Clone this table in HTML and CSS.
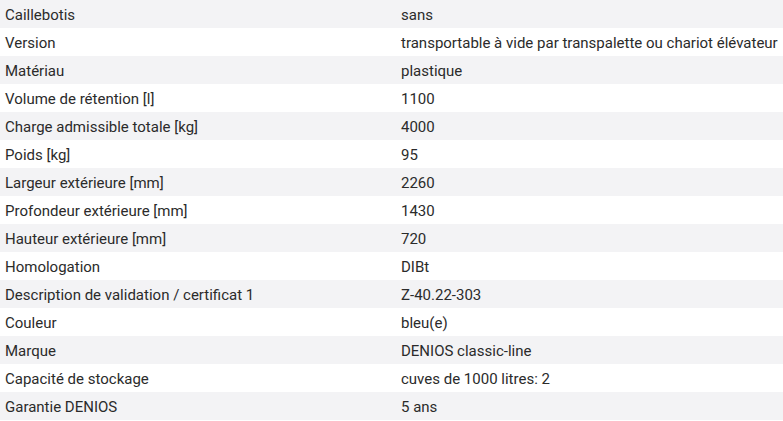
FILE: index.html
```html
<!DOCTYPE html>
<html lang="fr">
<head>
<meta charset="utf-8">
<link rel="stylesheet" href="styles.css">
</head>
<body>
<div class="specs">
  <div class="row"><div class="k">Caillebotis</div><div class="v">sans</div></div>
  <div class="row"><div class="k">Version</div><div class="v">transportable à vide par transpalette ou chariot élévateur</div></div>
  <div class="row"><div class="k">Matériau</div><div class="v">plastique</div></div>
  <div class="row"><div class="k">Volume de rétention [l]</div><div class="v">1100</div></div>
  <div class="row"><div class="k">Charge admissible totale [kg]</div><div class="v">4000</div></div>
  <div class="row"><div class="k">Poids [kg]</div><div class="v">95</div></div>
  <div class="row"><div class="k">Largeur extérieure [mm]</div><div class="v">2260</div></div>
  <div class="row"><div class="k">Profondeur extérieure [mm]</div><div class="v">1430</div></div>
  <div class="row"><div class="k">Hauteur extérieure [mm]</div><div class="v">720</div></div>
  <div class="row"><div class="k">Homologation</div><div class="v">DIBt</div></div>
  <div class="row"><div class="k">Description de validation / certificat 1</div><div class="v">Z-40.22-303</div></div>
  <div class="row"><div class="k">Couleur</div><div class="v">bleu(e)</div></div>
  <div class="row"><div class="k">Marque</div><div class="v">DENIOS classic-line</div></div>
  <div class="row"><div class="k">Capacité de stockage</div><div class="v">cuves de 1000 litres: 2</div></div>
  <div class="row"><div class="k">Garantie DENIOS</div><div class="v">5 ans</div></div>
</div>
</body>
</html>
```

FILE: styles.css
```css
html, body {
  margin: 0;
  padding: 0;
  background: #ffffff;
}
body {
  font-family: Roboto, "Liberation Sans", sans-serif;
  font-size: 15px;
  color: #2b2b2b;
}
.specs {
  display: flex;
  flex-direction: column;
}
.row {
  display: grid;
  grid-template-columns: 396px 1fr;
  height: 28px;
  align-items: center;
}
.row:nth-child(odd) {
  background: #f3f3f5;
}
.k {
  padding-left: 5px;
  padding-top: 1px;
  white-space: nowrap;
}
.v {
  padding-left: 5px;
  padding-top: 1px;
  white-space: nowrap;
}
```
